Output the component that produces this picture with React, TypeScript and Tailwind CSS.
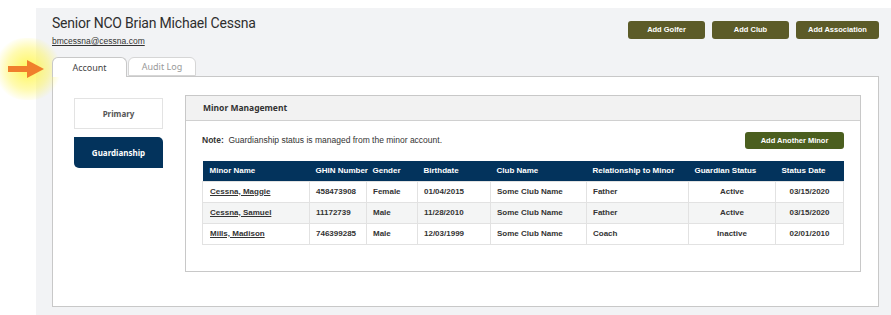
import React from "react";

const minors = [
  { name: "Cessna, Maggie", ghin: "458473908", gender: "Female", birth: "01/04/2015", club: "Some Club Name", rel: "Father", status: "Active", date: "03/15/2020" },
  { name: "Cessna, Samuel", ghin: "11172739", gender: "Male", birth: "11/28/2010", club: "Some Club Name", rel: "Father", status: "Active", date: "03/15/2020" },
  { name: "Mills, Madison", ghin: "746399285", gender: "Male", birth: "12/03/1999", club: "Some Club Name", rel: "Coach", status: "Inactive", date: "02/01/2010" },
];

function Arrow() {
  return (
    <div className="absolute left-0 top-[40px] w-[60px] h-[58px]">
      <div className="absolute -left-[6px] -top-[2px] w-[68px] h-[62px] rounded-full bg-[radial-gradient(circle,rgba(255,245,60,0.85)_0%,rgba(255,245,80,0.45)_45%,rgba(255,255,255,0)_72%)]" />
      <svg className="absolute left-0 top-0" width="60" height="58" viewBox="0 0 60 58">
        <rect x="8" y="26" width="21" height="6" fill="#f07f2c" />
        <polygon points="27,20 44,29 27,38" fill="#f07f2c" />
      </svg>
    </div>
  );
}

export default function App() {
  const th = "h-[20px] px-[6px] text-left font-bold text-white whitespace-nowrap";
  const td = "h-[21px] px-[6px] border border-[#e2e2e2] font-bold text-[#333] whitespace-nowrap";
  return (
    <div className="relative w-[891px] h-[315px] bg-white pl-[36px] pt-[8px] overflow-hidden font-['Liberation_Sans',Arial,sans-serif]">
      <div className="h-[307px] bg-[#f2f3f5] pl-[16px] pr-[12px]">
        <div className="flex items-start justify-between">
          <div className="pt-[6px]">
            <h1 className="text-[14px] leading-[18px] text-[#2e2e2e] font-['Roboto',sans-serif] tracking-[-0.2px]">
              Senior NCO Brian Michael Cessna
            </h1>
            <a className="block mt-[3px] text-[8.5px] leading-[12px] text-[#333] underline">bmcessna@cessna.com</a>
          </div>
          <div className="flex gap-[7px] mt-[13px]">
            <button className="w-[77px] h-[18px] rounded-[3px] bg-[#5c5b28] text-white text-[7.5px] font-bold">Add Golfer</button>
            <button className="w-[77px] h-[18px] rounded-[3px] bg-[#5c5b28] text-white text-[7.5px] font-bold">Add Club</button>
            <button className="w-[83px] h-[18px] rounded-[3px] bg-[#5c5b28] text-white text-[7.5px] font-bold">Add Association</button>
          </div>
        </div>

        <div className="flex mt-[10px] gap-[1px] relative z-10 font-['Noto_Sans',sans-serif]">
          <div className="w-[75px] h-[20px] bg-white border border-b-0 border-[#c8c8c8] rounded-t-[6px] flex items-center justify-center text-[9px] text-[#444]">
            Account
          </div>
          <div className="w-[68px] h-[19px] bg-white border border-[#d6d6d6] rounded-t-[6px] flex items-center justify-center text-[9px] text-[#9a9a9a]">
            Audit Log
          </div>
        </div>

        <div className="-mt-[1px] h-[231px] bg-white border border-[#c8c8c8] flex pl-[21px] pr-[17px] pt-[18px]">
          <div className="w-[90px] flex flex-col gap-[8px] pt-[3px] font-['Noto_Sans',sans-serif]">
            <div className="h-[31px] border border-[#e3e3e3] flex items-center justify-center text-[8px] font-bold text-[#555]">
              Primary
            </div>
            <div className="h-[31px] bg-[#03335c] rounded-tr-[5px] rounded-bl-[5px] flex items-center justify-center text-[8px] font-bold text-white">
              Guardianship
            </div>
          </div>

          <div className="ml-[22px] flex-1 h-[177px] border border-[#c8c8c8] bg-white">
            <div className="h-[25px] bg-[#f2f2f2] border-b border-[#d0d0d0] flex items-center pl-[17px] text-[8.5px] font-bold text-[#333] font-['Noto_Sans',sans-serif]">
              Minor Management
            </div>
            <div className="px-[16px]">
              <div className="flex items-center justify-between mt-[11px]">
                <p className="text-[8.5px] text-[#333]">
                  <span className="font-bold">Note:</span>&nbsp; Guardianship status is managed from the minor account.
                </p>
                <button className="w-[99px] h-[17px] rounded-[3px] bg-[#4b5f1f] text-white text-[7.5px] font-bold">
                  Add Another Minor
                </button>
              </div>
              <table className="mt-[12px] w-[641px] border-collapse text-[8px] table-fixed">
                <thead>
                  <tr className="bg-[#03335c]">
                    <th className={`${th} w-[107px] pl-[7px]`}>Minor Name</th>
                    <th className={`${th} w-[57px]`}>GHIN Number</th>
                    <th className={`${th} w-[51px]`}>Gender</th>
                    <th className={`${th} w-[73px]`}>Birthdate</th>
                    <th className={`${th} w-[96px]`}>Club Name</th>
                    <th className={`${th} w-[102px]`}>Relationship to Minor</th>
                    <th className={`${th} w-[87px]`}>Guardian Status</th>
                    <th className={`${th} w-[68px]`}>Status Date</th>
                  </tr>
                </thead>
                <tbody>
                  {minors.map((m, i) => (
                    <tr key={m.name} className={i === 1 ? "bg-[#f4f5f5]" : "bg-white"}>
                      <td className={`${td} pl-[7px]`}><span className="underline">{m.name}</span></td>
                      <td className={td}>{m.ghin}</td>
                      <td className={td}>{m.gender}</td>
                      <td className={td}>{m.birth}</td>
                      <td className={td}>{m.club}</td>
                      <td className={td}>{m.rel}</td>
                      <td className={`${td} text-center`}>{m.status}</td>
                      <td className={`${td} text-center`}>{m.date}</td>
                    </tr>
                  ))}
                </tbody>
              </table>
            </div>
          </div>
        </div>
      </div>
      <Arrow />
    </div>
  );
}
